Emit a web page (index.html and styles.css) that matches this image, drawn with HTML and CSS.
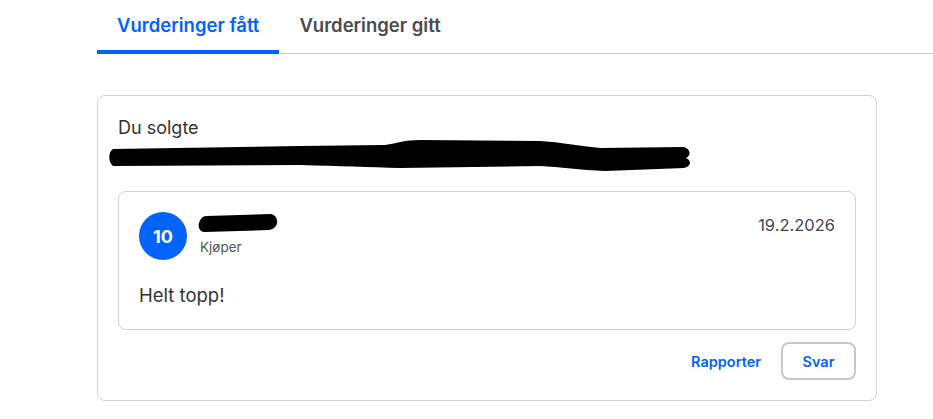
FILE: index.html
```html
<!DOCTYPE html>
<html lang="no">
<head>
  <meta charset="UTF-8" />
  <meta name="viewport" content="width=device-width, initial-scale=1.0"/>
  <title>Vurderinger</title>
  <link rel="stylesheet" href="styles.css">
</head>
<body>
  <div class="page">
    <nav class="tabs">
      <button class="tab active">Vurderinger fått</button>
      <button class="tab">Vurderinger gitt</button>
    </nav>
    <section class="review-card">
      <p class="sold-label">Du solgte</p>
      <svg class="redact-title" width="586" height="36" viewBox="108 138 586 36">
        <path d="M113 149 C108 152 108 162 113 166 L300 165 C340 166 370 167 400 168 L540 166 C560 167 580 170 605 171 L684 168 C692 166 691 160 686 158 C692 155 690 148 683 147 L600 148 C580 146 560 142 540 141 L420 140 C405 140 398 143 385 145 L300 146 Z" fill="#000"/>
      </svg>
      <div class="review">
        <div class="review-head">
          <div class="avatar">10</div>
          <div class="reviewer">
            <svg class="redact-name" width="84" height="26" viewBox="196 212 84 26">
              <path d="M200 219 C196 224 197 232 204 232 L268 230 C278 229 279 216 270 214 L206 216 C203 216 201 217 200 219 Z" fill="#000"/>
            </svg>
            <span class="role">Kjøper</span>
          </div>
          <span class="date">19.2.2026</span>
        </div>
        <p class="review-text">Helt topp!</p>
      </div>
      <div class="actions">
        <button class="link-btn">Rapporter</button>
        <button class="outline-btn">Svar</button>
      </div>
    </section>
  </div>
</body>
</html>
```

FILE: styles.css
```css
body {
  margin: 0;
  padding: 0;
  font-family: Inter, "Noto Sans", sans-serif;
  color: #464646;
  background: #fff;
}
.page {
  padding-left: 97px;
}
.tabs {
  display: flex;
  border-bottom: 1px solid #cfcfd4;
}
.tab {
  font-family: inherit;
  font-size: 18.5px;
  font-weight: 600;
  line-height: 26px;
  color: #4a4a4f;
  background: none;
  border: none;
  border-bottom: 4px solid transparent;
  margin-bottom: -1px;
  padding: 12px 20px 12px;
  cursor: pointer;
}
.tab.active {
  color: #0063fb;
  border-bottom-color: #0063fb;
}
.review-card {
  width: 738px;
  margin-top: 41px;
  border: 1px solid #d2d2d6;
  border-radius: 8px;
  padding: 19px 20px 20px 20px;
}
.sold-label {
  margin: 0;
  font-size: 18px;
  line-height: 25px;
  color: #333;
}
.redact-title {
  display: block;
  margin: -2px 0 17px -10px;
}
.review {
  border: 1px solid #d2d2d6;
  border-radius: 8px;
  padding: 20px 20px 21px 20px;
}
.review-head {
  display: flex;
  align-items: flex-start;
}
.avatar {
  width: 48px;
  height: 48px;
  border-radius: 50%;
  background: #0063fb;
  color: #fff;
  font-size: 18px;
  font-weight: 700;
  display: flex;
  align-items: center;
  justify-content: center;
}
.reviewer {
  display: flex;
  flex-direction: column;
  margin-left: 10px;
}
.redact-name {
  display: block;
}
.role {
  font-size: 13.5px;
  line-height: 18px;
  color: #555;
  margin-left: 3px;
}
.date {
  margin-left: auto;
  font-size: 16.5px;
  line-height: 24px;
  color: #464646;
  margin-top: 1px;
}
.review-text {
  margin: 22px 0 0;
  font-size: 18.5px;
  line-height: 26px;
  color: #333;
}
.actions {
  display: flex;
  justify-content: flex-end;
  align-items: center;
  gap: 20px;
  margin-top: 12px;
}
.link-btn {
  font-family: inherit;
  background: none;
  border: none;
  padding: 0;
  color: #0063fb;
  font-size: 14.5px;
  font-weight: 600;
  cursor: pointer;
}
.outline-btn {
  font-family: inherit;
  width: 75px;
  height: 38px;
  background: #fff;
  border: 2px solid #c6c6cc;
  border-radius: 8px;
  color: #0063fb;
  font-size: 14.5px;
  font-weight: 600;
  cursor: pointer;
}
```
